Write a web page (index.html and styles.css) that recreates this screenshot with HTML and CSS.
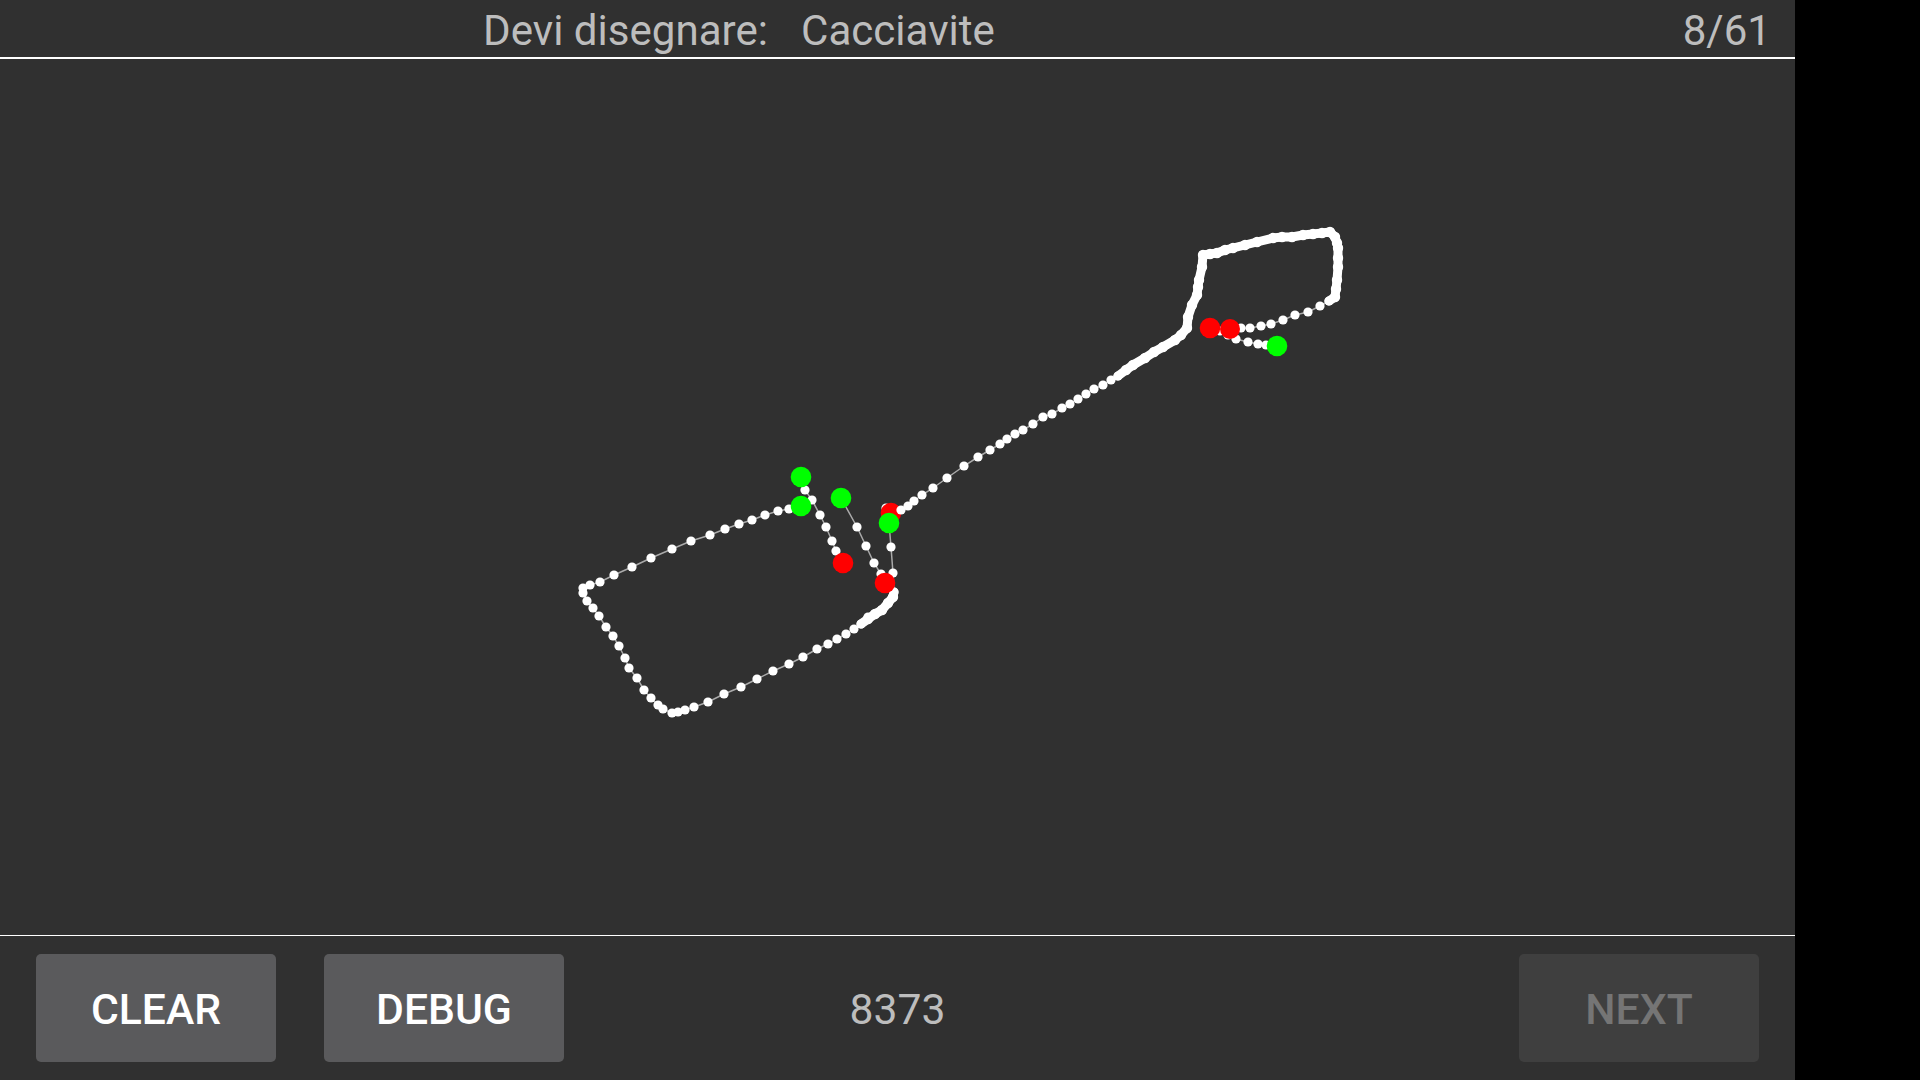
FILE: index.html
```html
<!DOCTYPE html>
<html lang="it">
<head>
    <meta charset="UTF-8">
    <title>Devi disegnare</title>
    <link rel="stylesheet" href="styles.css">
</head>
<body>
    <div class="app">
        <header class="barra barra-alto">
            <div class="sinistra">Devi disegnare:</div>
            <div class="centro">Cacciavite</div>
            <div class="destra">8/61</div>
        </header>

        <main class="tela">
            <svg class="disegno" viewBox="0 59 1795 876" xmlns="http://www.w3.org/2000/svg">
                <defs>
                    <marker id="punto" markerUnits="userSpaceOnUse" markerWidth="12" markerHeight="12" refX="6" refY="6">
                        <circle cx="6" cy="6" r="4.6" fill="#fff"></circle>
                    </marker>
                    <marker id="punto-largo" markerUnits="userSpaceOnUse" markerWidth="12" markerHeight="12" refX="6" refY="6">
                        <circle cx="6" cy="6" r="5.2" fill="#fff"></circle>
                    </marker>
                </defs>

                <!-- tratto lungo: lama e manico -->
                <polyline class="tratto" points="801,506 789,509 778,511 765,515 752,520 739,524 725,529 710,535 691,541 672,549 651,558 632,567 614,575 600,582 590,585 583,588 583,593 587,601 593,608 599,616 606,627 613,636 619,646 625,658 629,668 637,678 644,690 651,698 658,705 663,709 672,713 678,712 685,710 694,707 708,702 724,694 741,687 757,679 773,671 789,664 803,657 817,649 828,644 837,639 846,634 854,629 861,624 868,617 875,614 882,610 888,603 893,597 894,592 893,573 891,547 889,523"></polyline>

                <circle class="punto-bianco" cx="886" cy="508" r="4.6"></circle>
                <circle class="fine" cx="891" cy="513" r="10.3"></circle>
                <polyline class="tratto" points="901,510 908,506 914,501 922,495 933,488 947,478 964,466 978,457 990,450 1000,444 1007,439 1015,434 1023,430 1033,424 1043,417 1052,414 1062,408 1070,404 1078,399 1086,394 1094,389 1103,385 1111,380 1118,376 1133,365 1145,358 1163,347 1175,340 1187,328 1188,317 1192,305 1197,295 1199,280 1202,267 1203,255 1217,253 1233,248 1257,242 1273,238 1292,237 1313,234 1330,232 1335,237 1338,248 1338,267 1337,280 1335,297 1329,301 1320,306 1308,312 1295,315 1283,320 1271,324 1261,326 1250,328 1241,328"></polyline>

                <!-- parti dove i punti si toccano -->
                <polyline class="spesso" points="861,624 868,619 875,614 882,610 888,603 893,597 894,592"></polyline>
                <polyline class="spesso" points="1118,376 1126,370 1133,365 1145,358 1154,352 1163,347 1175,340 1181,335 1187,328 1188,317 1192,305 1197,295 1198,287 1199,280 1202,267 1203,255 1210,254 1217,253 1225,250 1233,248 1245,245 1257,242 1273,238 1282,237 1292,237 1303,235 1313,234 1322,233 1330,232 1335,237 1337,243 1338,248 1338,258 1338,267 1337,280 1336,289 1335,297 1329,301"></polyline>

                <polyline class="tratto" points="801,477 805,490 812,500 820,515 826,527 832,541 836,551 843,563"></polyline>
                <polyline class="tratto" points="841,498 857,527 866,546 874,563 881,574 885,583"></polyline>
                <polyline class="tratto" points="1277,346 1266,345 1258,344 1248,342 1236,339 1228,335 1220,331 1210,328"></polyline>

                <circle class="inizio" cx="801" cy="477" r="10.3"></circle>
                <circle class="inizio" cx="801" cy="506" r="10.3"></circle>
                <circle class="inizio" cx="841" cy="498" r="10.3"></circle>
                <circle class="inizio" cx="889" cy="523" r="10.3"></circle>
                <circle class="inizio" cx="1277" cy="346" r="10.3"></circle>

                <circle class="fine" cx="843" cy="563" r="10.3"></circle>
                <circle class="fine" cx="885" cy="583" r="10.3"></circle>
                <circle class="fine" cx="1230" cy="329" r="10"></circle>
                <circle class="fine" cx="1210" cy="328" r="10.3"></circle>
            </svg>
        </main>

        <footer class="barra barra-basso">
            <div class="sinistra">
                <button type="button" class="bottone">CLEAR</button>
                <button type="button" class="bottone">DEBUG</button>
            </div>
            <div class="centro">8373</div>
            <div class="destra">
                <button type="button" class="bottone spento" disabled>NEXT</button>
            </div>
        </footer>
    </div>
</body>
</html>
```

FILE: styles.css
```css
html, body {
    margin: 0;
    height: 100%;
    background-color: #000;
}
.app {
    width: 1795px;
    height: 1080px;
    display: flex;
    flex-direction: column;
    background-color: #303030;
    color: #bdbdbd;
    font-family: Roboto, "Liberation Sans", sans-serif;
    font-size: 42.67px;
    overflow: hidden;
}
.barra {
    display: grid;
    grid-template-columns: 1fr 193px 1fr;
    align-items: center;
    white-space: nowrap;
}
.barra-alto {
    height: 57px;
    font-size: 42.1px;
    border-bottom: 2px solid #fff;
}
.barra-alto > div {
    padding-top: 3px;
}
.barra-alto .sinistra {
    justify-self: end;
    margin-right: 33px;
}
.barra-alto .destra {
    justify-self: end;
    margin-right: 24px;
}
.barra-basso {
    height: 144px;
    border-top: 1px solid #fff;
}
.barra-basso .sinistra {
    display: flex;
    gap: 48px;
    padding-left: 36px;
}
.barra-basso .destra {
    justify-self: end;
    padding-right: 36px;
}
.centro {
    text-align: center;
}
.barra-basso .centro {
    padding-top: 1px;
}
.tela {
    flex: 1;
    min-height: 0;
}
.disegno {
    display: block;
    width: 100%;
    height: 100%;
}
.tratto {
    fill: none;
    stroke: #aaa;
    stroke-width: 1.5;
    marker-start: url(#punto);
    marker-mid: url(#punto);
    marker-end: url(#punto);
}
.spesso {
    fill: none;
    stroke: #fff;
    stroke-width: 9;
    stroke-linecap: round;
    stroke-linejoin: round;
    marker-mid: url(#punto-largo);
}
.punto-bianco {
    fill: #fff;
}
.inizio {
    fill: #00ff00;
}
.fine {
    fill: #ff0000;
}
.bottone {
    width: 240px;
    height: 108px;
    padding: 2px 0 0;
    border: none;
    border-radius: 5px;
    background-color: #5a5a5c;
    color: #fff;
    font-family: Roboto, "Liberation Sans", sans-serif;
    font-size: 42.67px;
    font-weight: 500;
}
.spento {
    background-color: #3f3f3f;
    color: #757575;
}
```
